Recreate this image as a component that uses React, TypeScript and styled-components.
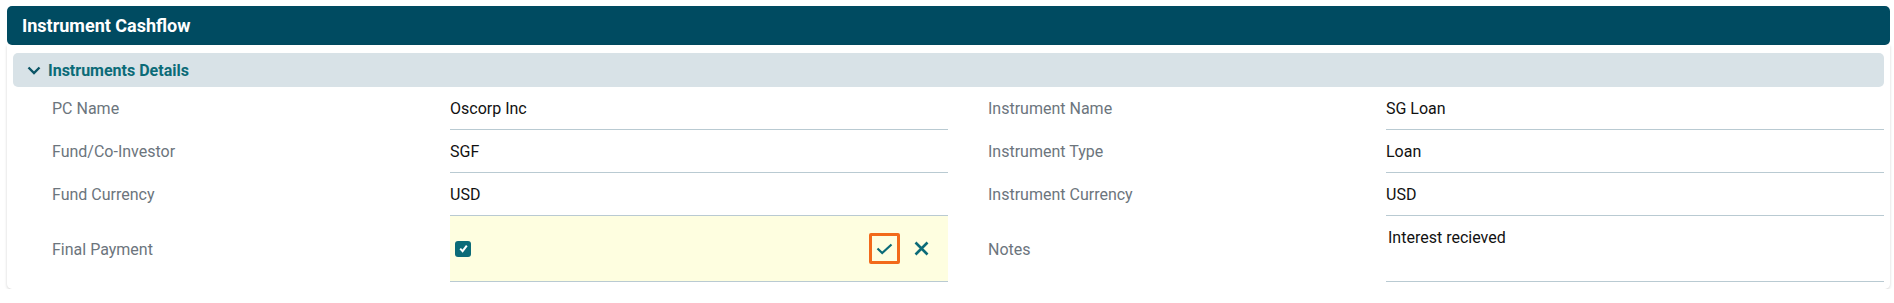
import React from 'react';
import styled, { createGlobalStyle } from 'styled-components';

const TEAL_DARK = '#004b61';
const TEAL = '#0b6b78';
const DIVIDER = '#b9cad2';

const GlobalStyle = createGlobalStyle`
  html, body {
    margin: 0;
    padding: 0;
    background: #ffffff;
    font-family: Roboto, 'Liberation Sans', Arial, sans-serif;
  }
`;

const Page = styled.div`
  padding: 6px 4px 0 7px;
`;

const PanelHeader = styled.div`
  display: flex;
  align-items: center;
  height: 39px;
  padding-left: 15px;
  background-color: ${TEAL_DARK};
  border-radius: 5px;
  color: #ffffff;
  font-size: 18px;
  font-weight: 700;
`;

const PanelBody = styled.div`
  padding: 8px 6px 7px 6px;
  background: #ffffff;
  border-radius: 0 0 5px 5px;
  box-shadow: 0 1px 3px rgba(0, 0, 0, 0.18);
`;

const SectionHeader = styled.div`
  display: flex;
  align-items: center;
  gap: 7px;
  height: 34px;
  padding-left: 14px;
  background-color: #d8e2e7;
  border-radius: 5px;
  color: ${TEAL};
  font-size: 16px;
  font-weight: 700;
`;

const FieldsGrid = styled.div`
  display: grid;
  grid-template-columns: 1fr 1fr;
  column-gap: 40px;
  margin-left: 39px;
`;

const FieldColumn = styled.div`
  display: grid;
  grid-template-columns: 398px 1fr;
`;

const Label = styled.div<{ $height: number }>`
  display: flex;
  align-items: center;
  height: ${(p) => p.$height}px;
  color: #6c757d;
  font-size: 16px;
`;

const Value = styled.div<{ $height: number; $editing?: boolean; $top?: boolean }>`
  display: flex;
  align-items: ${(p) => (p.$top ? 'flex-start' : 'center')};
  box-sizing: border-box;
  height: ${(p) => p.$height}px;
  padding-top: ${(p) => (p.$top ? '12px' : '0')};
  padding-left: ${(p) => (p.$top ? '2px' : '0')};
  border-bottom: 1px solid ${DIVIDER};
  background-color: ${(p) => (p.$editing ? '#fefee0' : 'transparent')};
  color: #111111;
  font-size: 16px;
`;

const CheckBox = styled.span`
  display: inline-flex;
  align-items: center;
  justify-content: center;
  width: 16px;
  height: 16px;
  margin-left: 5px;
  border-radius: 3px;
  background-color: ${TEAL};
`;

const Actions = styled.div`
  display: flex;
  align-items: center;
  gap: 6px;
  margin-left: auto;
  padding-right: 11px;
`;

const ActionButton = styled.button<{ $focused?: boolean }>`
  display: flex;
  align-items: center;
  justify-content: center;
  box-sizing: border-box;
  width: 31px;
  height: 31px;
  padding: 0;
  background: transparent;
  border: 3px solid ${(p) => (p.$focused ? '#f26a1b' : 'transparent')};
  border-radius: 2px;
  cursor: pointer;
`;

const ChevronDown = () => (
  <svg width='14' height='9' viewBox='0 0 14 9'>
    <path d='M1.5 1.5 L7 7 L12.5 1.5' fill='none' stroke='#0b5566' strokeWidth='2.4' />
  </svg>
);

const SmallCheck = () => (
  <svg width='11' height='11' viewBox='0 0 11 11'>
    <path d='M2.2 5.6 L4.6 8.2 L8.8 2.6' fill='none' stroke='#ffffff' strokeWidth='2' />
  </svg>
);

const ConfirmIcon = () => (
  <svg width='17' height='12' viewBox='0 0 17 12'>
    <path d='M1.5 5.5 L6.2 10 L15.5 1.5' fill='none' stroke={TEAL} strokeWidth='2.2' />
  </svg>
);

const CancelIcon = () => (
  <svg width='15' height='15' viewBox='0 0 15 15'>
    <path d='M1.5 1.5 L13.5 13.5 M13.5 1.5 L1.5 13.5' fill='none' stroke={TEAL} strokeWidth='2.6' />
  </svg>
);

const ROW_HEIGHTS = [43, 43, 43, 66];

export default function App() {
  return (
    <Page>
      <GlobalStyle />
      <PanelHeader>Instrument Cashflow</PanelHeader>
      <PanelBody>
        <SectionHeader>
          <ChevronDown />
          Instruments Details
        </SectionHeader>
        <FieldsGrid>
          <FieldColumn>
            <Label $height={ROW_HEIGHTS[0]}>PC Name</Label>
            <Value $height={ROW_HEIGHTS[0]}>Oscorp Inc</Value>
            <Label $height={ROW_HEIGHTS[1]}>Fund/Co-Investor</Label>
            <Value $height={ROW_HEIGHTS[1]}>SGF</Value>
            <Label $height={ROW_HEIGHTS[2]}>Fund Currency</Label>
            <Value $height={ROW_HEIGHTS[2]}>USD</Value>
            <Label $height={ROW_HEIGHTS[3]}>Final Payment</Label>
            <Value $height={ROW_HEIGHTS[3]} $editing>
              <CheckBox>
                <SmallCheck />
              </CheckBox>
              <Actions>
                <ActionButton $focused title='Save'>
                  <ConfirmIcon />
                </ActionButton>
                <ActionButton title='Cancel'>
                  <CancelIcon />
                </ActionButton>
              </Actions>
            </Value>
          </FieldColumn>
          <FieldColumn>
            <Label $height={ROW_HEIGHTS[0]}>Instrument Name</Label>
            <Value $height={ROW_HEIGHTS[0]}>SG Loan</Value>
            <Label $height={ROW_HEIGHTS[1]}>Instrument Type</Label>
            <Value $height={ROW_HEIGHTS[1]}>Loan</Value>
            <Label $height={ROW_HEIGHTS[2]}>Instrument Currency</Label>
            <Value $height={ROW_HEIGHTS[2]}>USD</Value>
            <Label $height={ROW_HEIGHTS[3]}>Notes</Label>
            <Value $height={ROW_HEIGHTS[3]} $top>
              Interest recieved
            </Value>
          </FieldColumn>
        </FieldsGrid>
      </PanelBody>
    </Page>
  );
}
